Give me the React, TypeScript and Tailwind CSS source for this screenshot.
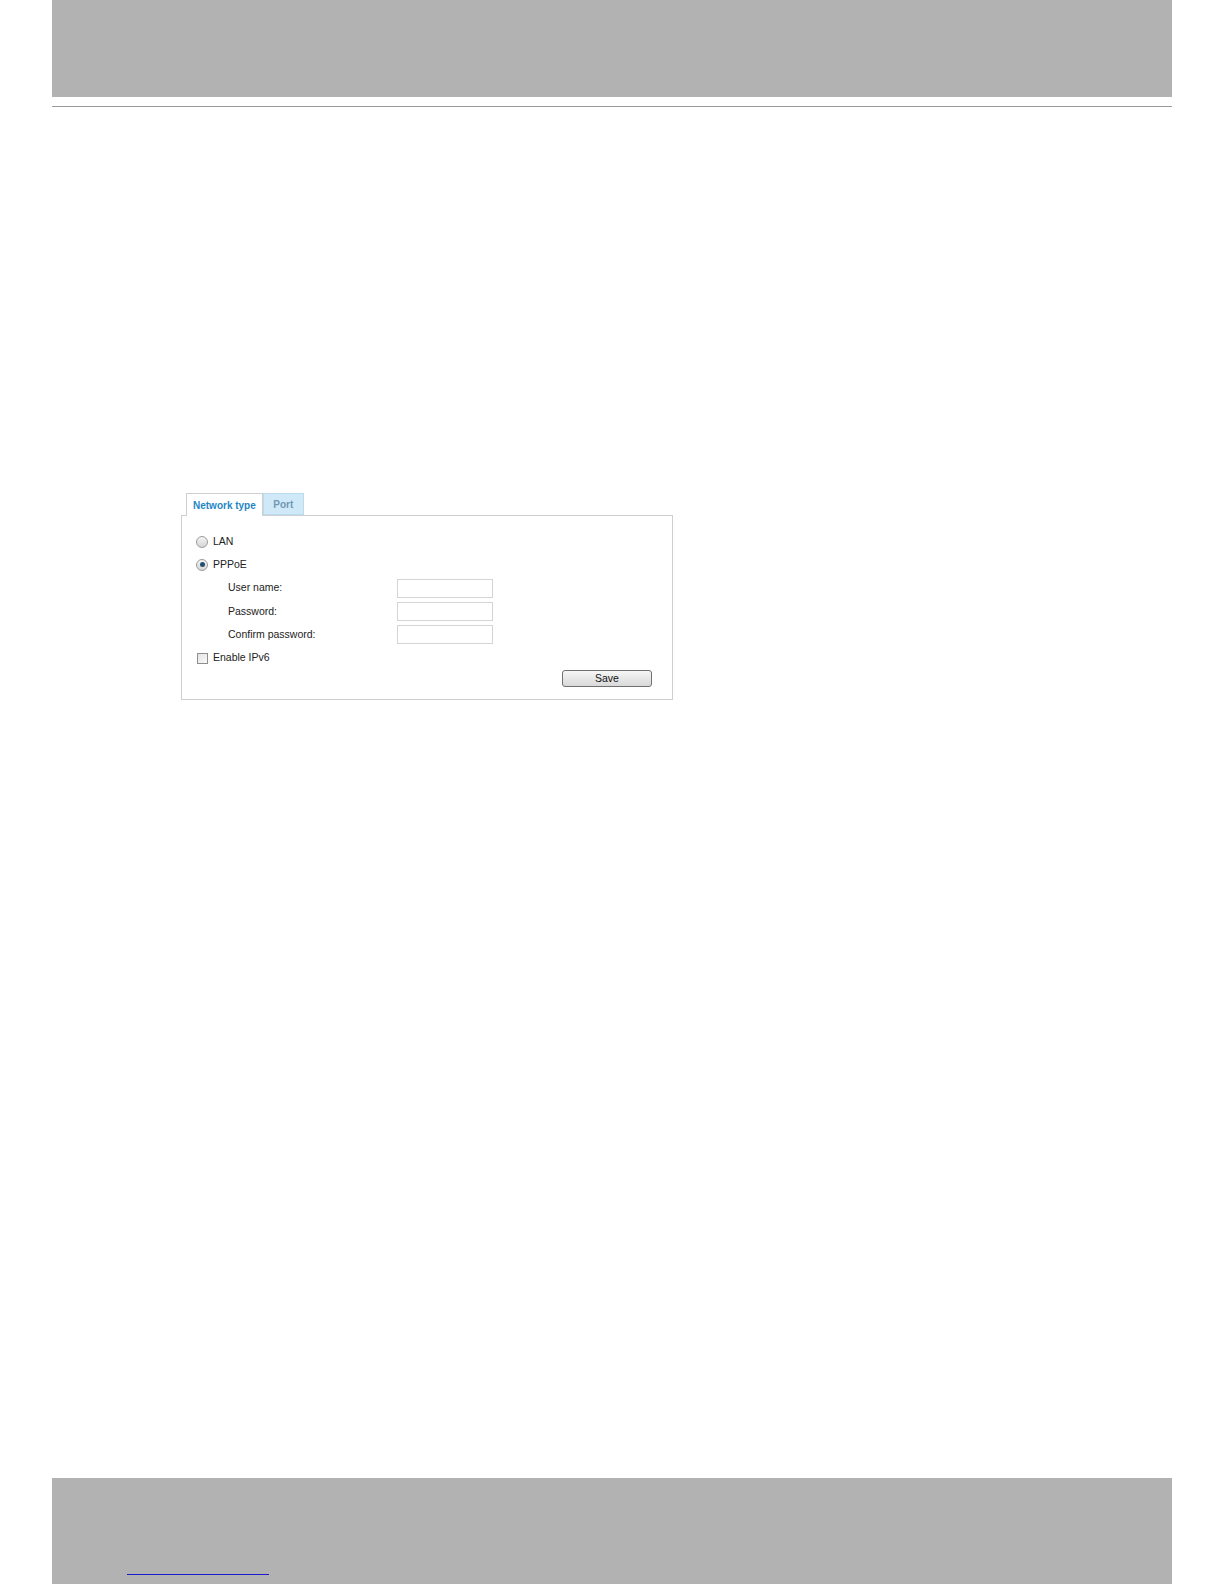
import React from "react";

function Radio({ checked }: { checked?: boolean }) {
  return (
    <span className="w-[12px] h-[12px] rounded-full border border-[#9c9c9c] bg-gradient-to-b from-[#f4f4f4] to-[#d6d6d6] flex items-center justify-center shrink-0">
      {checked ? <span className="w-[5px] h-[5px] rounded-full bg-[#23506e]" /> : null}
    </span>
  );
}

function Field({ label }: { label: string }) {
  return (
    <div className="h-[23.3px] flex items-center">
      <span className="w-[215px] pl-[46px] text-[10.5px] text-[#222]">{label}</span>
      <span className="w-[96px] h-[19px] border border-[#d4d4d4] bg-white" />
    </div>
  );
}

export default function App() {
  return (
    <div className="w-[1224px] h-[1584px] bg-white flex flex-col font-['Liberation_Sans',Arial,sans-serif]">
      <div className="mx-[52px] h-[97px] bg-[#b2b2b2] shrink-0" />
      <div className="mx-[52px] mt-[9px] h-px bg-[#9a9a9a] shrink-0" />
      <div className="flex-1 pt-[386px] pl-[181px]">
        <div className="w-[492px]">
          <div className="flex pl-[5px] h-[23px] relative z-10">
            <div className="h-[23px] px-[6px] border border-b-0 border-[#cfcfcf] bg-white flex items-center text-[10px] font-bold text-[#1f86c6]">
              Network type
            </div>
            <div className="h-[22px] w-[41px] border border-[#b9dcef] bg-[#cfe9f8] flex items-center justify-center text-[10px] font-bold text-[#6f98b3]">
              Port
            </div>
          </div>
          <div className="-mt-px h-[185px] border border-[#cfcfcf] bg-white pt-[14px] flex flex-col">
            <div className="h-[23.3px] flex items-center gap-[5px] pl-[14px]">
              <Radio />
              <span className="text-[10.5px] text-[#222]">LAN</span>
            </div>
            <div className="h-[23.3px] flex items-center gap-[5px] pl-[14px]">
              <Radio checked />
              <span className="text-[10.5px] text-[#222]">PPPoE</span>
            </div>
            <Field label="User name:" />
            <Field label="Password:" />
            <Field label="Confirm password:" />
            <div className="h-[23.3px] flex items-center gap-[5px] pl-[15px]">
              <span className="w-[11px] h-[11px] border border-[#8e8e8e] bg-gradient-to-br from-[#e6e6e6] to-[#f8f8f8] shrink-0" />
              <span className="text-[10.5px] text-[#222]">Enable IPv6</span>
            </div>
            <div className="flex justify-end pr-[20px]">
              <button className="w-[90px] h-[17px] rounded-[3px] border border-[#707070] bg-gradient-to-b from-[#f6f6f6] to-[#d9d9d9] text-[10.5px] text-[#111] leading-none">
                Save
              </button>
            </div>
          </div>
        </div>
      </div>
      <div className="mx-[52px] h-[106px] bg-[#b2b2b2] shrink-0 flex flex-col">
        <a className="mt-[96px] ml-[75px] w-[142px] h-px bg-[#1c1ccf] block" href="#" aria-label="link" />
      </div>
    </div>
  );
}
